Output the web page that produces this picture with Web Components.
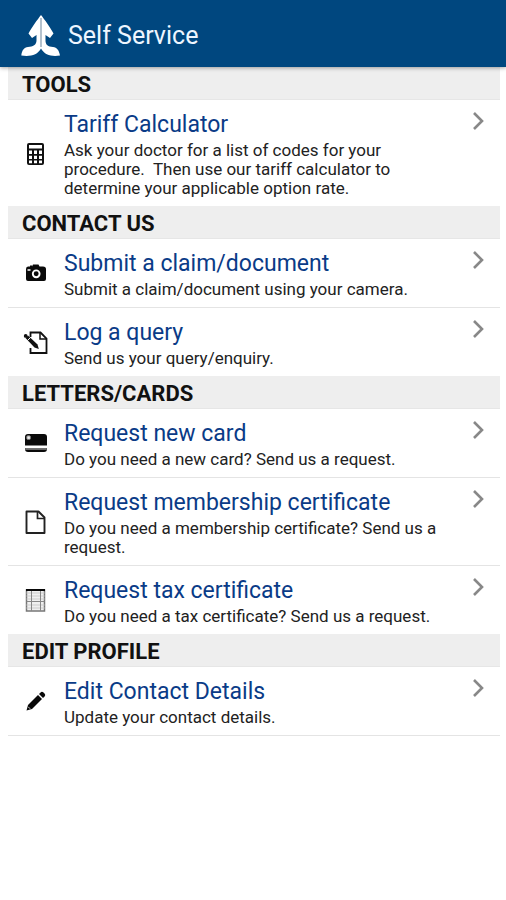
<!DOCTYPE html>
<html lang="en">
<head>
<meta charset="utf-8">
<meta name="viewport" content="width=device-width, initial-scale=1">
<title>Self Service</title>
<style>
body { margin: 0; background: #fff; color: #111; font-family: Roboto, "Noto Sans", sans-serif; }
main { padding: 0 6px 0 8px; }
</style>
</head>
<body>
<app-header>Self Service</app-header>
<main>
  <menu-section heading="TOOLS">
    <menu-item icon="calculator" heading="Tariff Calculator">Ask your doctor for a list of codes for your procedure.&nbsp; Then use our tariff calculator to determine your applicable option rate.</menu-item>
  </menu-section>
  <menu-section heading="CONTACT US">
    <menu-item icon="camera" heading="Submit a claim/document" divider>Submit a claim/document using your camera.</menu-item>
    <menu-item icon="note" heading="Log a query">Send us your query/enquiry.</menu-item>
  </menu-section>
  <menu-section heading="LETTERS/CARDS">
    <menu-item icon="card" heading="Request new card" divider>Do you need a new card? Send us a request.</menu-item>
    <menu-item icon="page" heading="Request membership certificate" divider>Do you need a membership certificate? Send us a request.</menu-item>
    <menu-item icon="table" heading="Request tax certificate">Do you need a tax certificate? Send us a request.</menu-item>
  </menu-section>
  <menu-section heading="EDIT PROFILE">
    <menu-item icon="pencil" heading="Edit Contact Details" divider>Update your contact details.</menu-item>
  </menu-section>
</main>
<script>
const ICONS = {
  calculator: `<rect x="4" y="2" width="17" height="22" rx="2" fill="#111"/><path d="M6 4h13v3.500H6ZM6 9.500h3V13H6ZM11 9.500h3V13h-3ZM16 9.500h3V13h-3ZM6 14.700h3V18H6ZM11 14.700h3V18h-3ZM16 14.700h3V18h-3ZM6 19.600h3v2.600H6ZM11 19.600h3v2.600h-3ZM16 19.600h3v2.600h-3Z" fill="#fff"/>`,
  camera: `<path d="M5 5.500h2v-1h2v1l1-2h5.500l1 2H20q3 0 3 2.500V18q0 2-2 2H5q-2 0-2-2V8q0-2.500 2-2.500Z" fill="#0a0a0a"/><circle cx="13.200" cy="12.800" r="3.400" fill="none" stroke="#fff" stroke-width="1.900"/><path d="M4.500 9h3" stroke="#fff" stroke-width="1.500"/>`,
  note: `<path d="M7.500 7V2.500h10l6 6V23H7.500v-5" fill="none" stroke="#111" stroke-width="1.800"/><path d="M17 2.500V9h6.500" fill="none" stroke="#111" stroke-width="1.500"/><path d="M2.500 8 5 5.500 14.500 14.500 15.800 19 11.500 17.500Z" fill="#111"/><path d="m4.500 10.500 3-3" stroke="#fff"/><circle cx="2.700" cy="5.900" r="1.900" fill="#111"/>`,
  card: `<rect x="2" y="3" width="22" height="18" rx="3" fill="#0a0a0a"/><path d="M2 15.800h22" stroke="#fff" stroke-width="2.600"/><path d="M2.200 18h21.600" stroke="#aaa" stroke-width="1.200"/><rect x="3.800" y="4.800" width="3.600" height="3.600" rx="1" fill="#eee" stroke="#777"/>`,
  page: `<path d="M3.500 1.500h12l6 6V23h-18Z" fill="none" stroke="#222" stroke-width="1.900" stroke-linejoin="round"/><path d="M14.500 1.500v7h7" fill="none" stroke="#222" stroke-width="1.700"/>`,
  table: `<rect x="3.500" y="2" width="18" height="21" fill="#f0f0f0" stroke="#777" stroke-width="1.500"/><path d="M3.500 5h18M3.500 8h18M3.500 11h18M3.500 17h18M3.500 20h18" stroke="#ccc"/><path d="M3.500 13.500h18M8.500 3v20M17.500 3v20" stroke="#888"/><path d="M3 2h19" stroke="#000" stroke-width="1.900"/>`,
  pencil: `<path d="M3.500 21.500 5 16 15 6 19 10 9 20Z" fill="#080808"/><path d="m16 5 1.600-1.600q1.400-1.300 2.900.1l1 1q1.500 1.500.1 2.900L20 9Z" fill="#080808"/><path d="m5.200 17.800 2 2" stroke="#fff" stroke-width=".8"/>`
};

customElements.define('app-header', class extends HTMLElement {
  constructor() {
    super();
    this.attachShadow({ mode: 'open' }).innerHTML = `
      <style>
        :host { display: block; position: relative; background: #00477f; color: #eef6ff; box-shadow: 0 1px 4px rgba(0,0,0,.35); }
        header { display: flex; align-items: center; gap: 8px; height: 67px; padding: 4px 20px 0; box-sizing: border-box; }
        svg { width: 40px; height: 42px; flex: none; }
        h1 { margin: 0; font-size: 25px; line-height: 30px; font-weight: 400; }
      </style>
      <header>
        <svg viewBox="0 0 40 42" aria-hidden="true">
          <path d="M21 0C17.500 4.500 12 12 8.500 18.500L12 23l4.500-3v5.500C16.500 30 13 31.500 8 32 4 32.500 2 35 1.300 40.500 10 42 17.500 40 21 33.500 24.500 40 32 42 40 40.500 39 35 37 32.500 33 32c-5-.5-7.500-2-7.500-6.500V20l4.500 3 3.500-4.500C30 12 24.500 4.500 21 0Z" fill="#fff"/>
          <path d="M21 3v29" stroke="#8299ad" stroke-width="1.200"/>
        </svg>
        <h1><slot></slot></h1>
      </header>`;
  }
});

customElements.define('menu-section', class extends HTMLElement {
  connectedCallback() {
    if (this.shadowRoot) return;
    this.attachShadow({ mode: 'open' }).innerHTML = `
      <style>
        :host { display: block; }
        h2 { margin: 0; padding: 3px 14px 0; border-bottom: 1px solid #e6e6e6; background: #eee; color: #111; font-size: 22px; line-height: 29px; font-weight: 700; }
      </style>
      <section><h2></h2><slot></slot></section>`;
    this.shadowRoot.querySelector('h2').textContent = this.getAttribute('heading');
  }
});

customElements.define('menu-item', class extends HTMLElement {
  connectedCallback() {
    if (this.shadowRoot) return;
    this.attachShadow({ mode: 'open' }).innerHTML = `
      <style>
        :host { display: block; }
        :host([divider]) { border-bottom: 1px solid #e4e4e4; }
        a { display: grid; grid-template-columns: 26px minmax(0, 1fr) 16px; column-gap: 15px; padding: 10px 14px 8px 15px; color: inherit; text-decoration: none; }
        .icon { width: 26px; height: 26px; align-self: center; }
        .body { padding: 2px 12px 0 0; }
        h3 { margin: 0 0 3px; color: #0a3b87; font-size: 23px; line-height: 26px; font-weight: 400; }
        p { margin: 0; font-size: 17px; line-height: 19px; color: #222; }
        .chevron { width: 16px; height: 22px; }
      </style>
      <a href="#">
        <svg class="icon" viewBox="0 0 26 26" aria-hidden="true">${ICONS[this.getAttribute('icon')]}</svg>
        <div class="body"><h3></h3><p><slot></slot></p></div>
        <svg class="chevron" viewBox="0 0 16 22" aria-hidden="true"><path d="m4 3 8 8-8 8" fill="none" stroke="#888" stroke-width="2.600"/></svg>
      </a>`;
    this.shadowRoot.querySelector('h3').textContent = this.getAttribute('heading');
  }
});
</script>
</body>
</html>
